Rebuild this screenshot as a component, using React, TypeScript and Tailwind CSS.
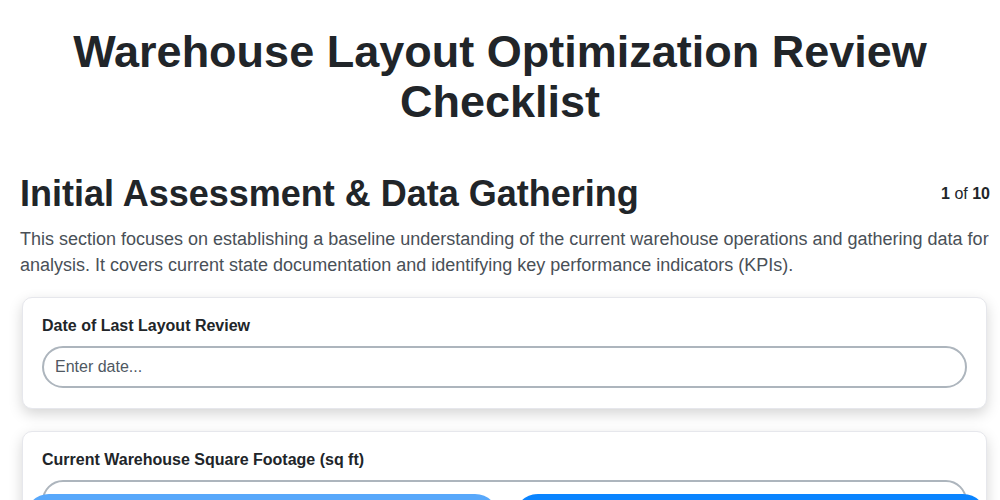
import React from "react";

const font = { fontFamily: '"Liberation Sans", Arial, sans-serif' };

function Card({ label, placeholder }: { label: string; placeholder: string }) {
  return (
    <div className="ml-[2px] mr-[3px] mb-[22px] rounded-[10px] border border-[#e6e7ec] bg-white px-[19px] pt-[18px] pb-[20px] shadow-[0_5px_14px_rgba(0,0,0,0.17)]">
      <label className="mb-[10px] block text-[16px] font-bold leading-[20px] text-[#212529]">{label}</label>
      <input
        className="block h-[42px] w-full rounded-full border-2 border-[#adb5bd] bg-white px-[11px] text-[16px] text-[#212529] outline-none placeholder:text-[#4f5862]"
        placeholder={placeholder}
      />
    </div>
  );
}

export default function App() {
  return (
    <div className="h-screen overflow-hidden bg-white text-[#212529]" style={font}>
      <header className="px-5 pt-[27px]">
        <h1 className="text-center text-[45px] font-bold leading-[50px] text-[#212529]">
          Warehouse Layout Optimization Review Checklist
        </h1>
      </header>
      <main className="pl-5 pr-[10px]">
        <div className="mt-[45px] flex items-start justify-between">
          <h2 className="text-[36px] font-bold leading-[43px] text-[#212529]">Initial Assessment &amp; Data Gathering</h2>
          <div className="pt-[12px] text-[16px] leading-[20px] text-[#212529]">
            <span className="font-bold">1</span> of <span className="font-bold">10</span>
          </div>
        </div>
        <p className="mt-[11px] mb-[19px] text-[18px] leading-[26px] text-[#495057]">
          This section focuses on establishing a baseline understanding of the current warehouse operations and gathering data for analysis. It covers current state documentation and identifying key performance indicators (KPIs).
        </p>
        <Card label="Date of Last Layout Review" placeholder="Enter date..." />
        <Card label="Current Warehouse Square Footage (sq ft)" placeholder="Enter a number..." />
      </main>
      <div className="fixed left-[25px] right-[13px] top-[494px] flex gap-[15px]">
        <button className="h-[48px] flex-1 rounded-full bg-[#58a8fb] text-[16px] font-bold text-white">Previous</button>
        <button className="h-[48px] flex-1 rounded-full bg-[#0a84ff] text-[16px] font-bold text-white">Next</button>
      </div>
    </div>
  );
}
